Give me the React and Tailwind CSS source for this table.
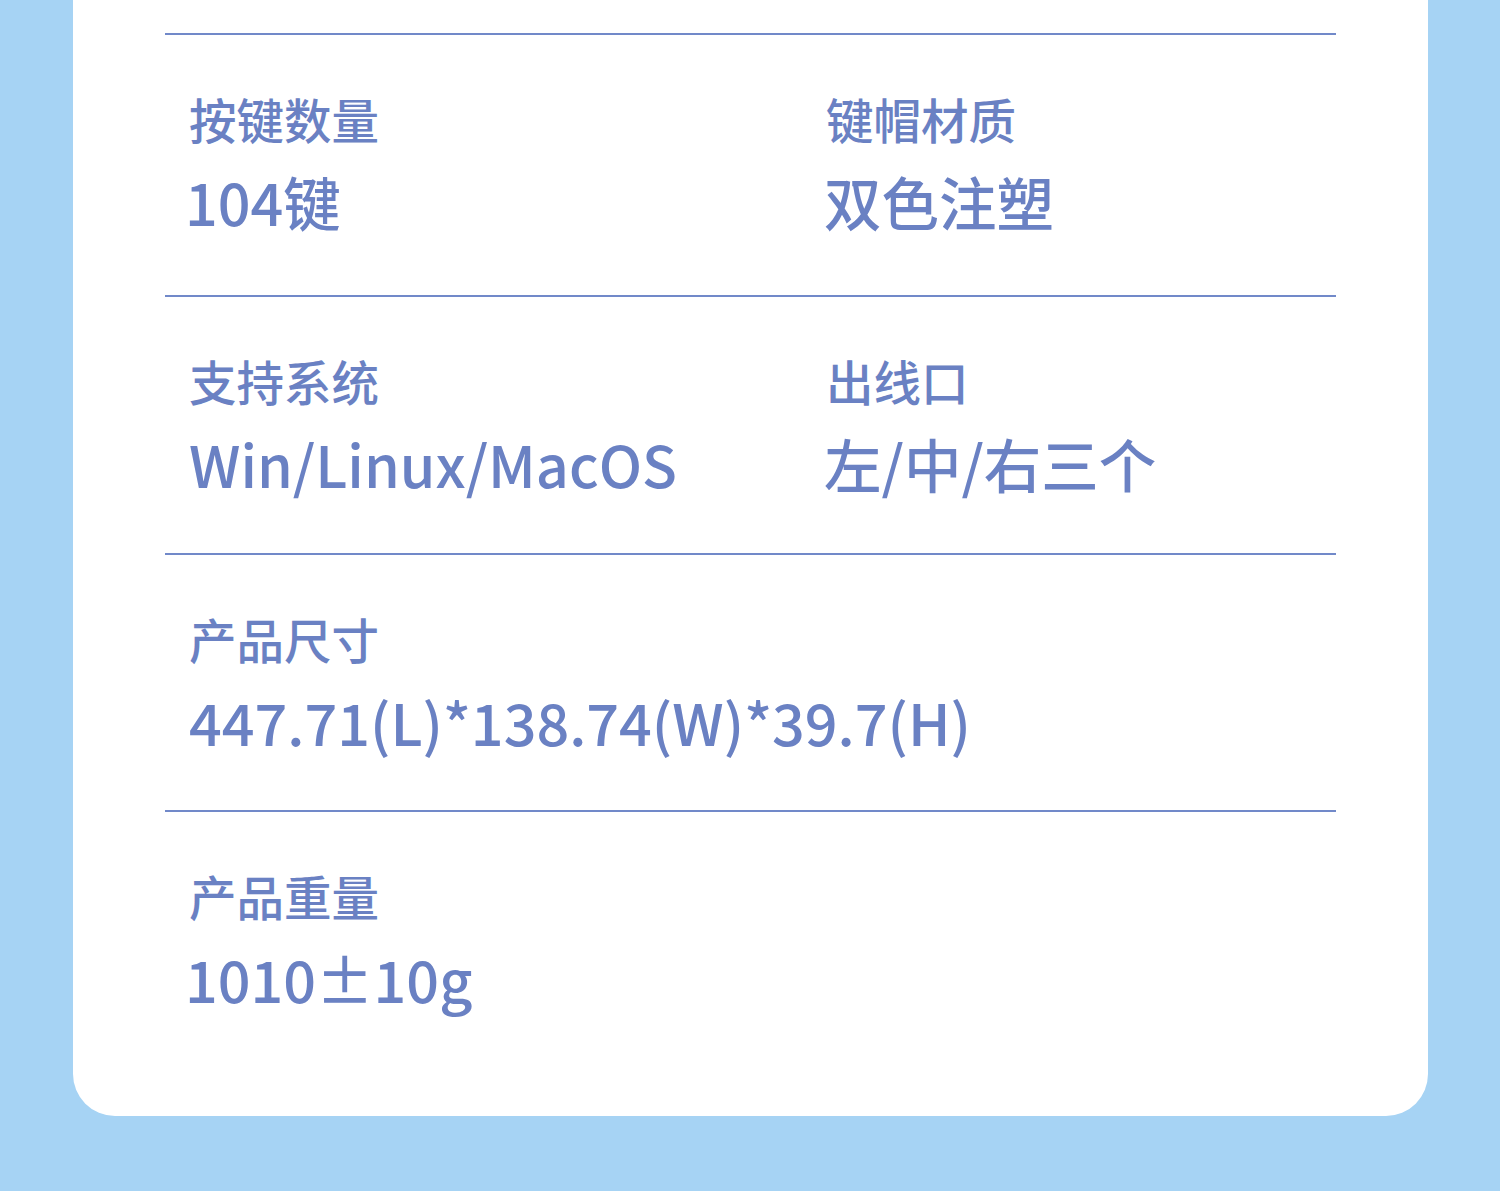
export default function App() {
  const rows = [
    { h: 'h-[262px]', items: [['按键数量', '104键', '-ml-[4px]'], ['键帽材质', '双色注塑', '-ml-[2px]']] },
    { h: 'h-[258px]', items: [['支持系统', 'Win/Linux/MacOS', ''], ['出线口', '左/中/右三个', '-ml-[2px]']] },
    { h: 'h-[257px]', items: [['产品尺寸', '447.71(L)*138.74(W)*39.7(H)', '']] },
    { h: 'h-[306px]', items: [['产品重量', '1010±10g', '-ml-[4px]']] },
  ];
  return (
    <div
      className="w-[1500px] h-[1191px] bg-[#a6d3f4] overflow-hidden"
      style={{ fontFamily: '"Noto Sans CJK SC", "Noto Sans", sans-serif' }}
    >
      <div className="ml-[73px] w-[1355px] h-[1116px] bg-white rounded-b-[42px] px-[92px] pt-[33px] text-[#6a81c3]">
        {rows.map((row, i) => (
          <div key={i} className={`${row.h} border-t-2 border-[#7189c9] grid grid-cols-[637px_1fr] pl-[24px] pt-[60px]`}>
            {row.items.map(([label, value, shift], j) => (
              <div key={j} className="flex flex-col">
                <div className="text-[47.5px] leading-[47.5px] font-medium">{label}</div>
                <div className={`mt-[30px] text-[57.5px] leading-[57.5px] font-medium ${shift}`}>{value}</div>
              </div>
            ))}
          </div>
        ))}
      </div>
    </div>
  );
}
